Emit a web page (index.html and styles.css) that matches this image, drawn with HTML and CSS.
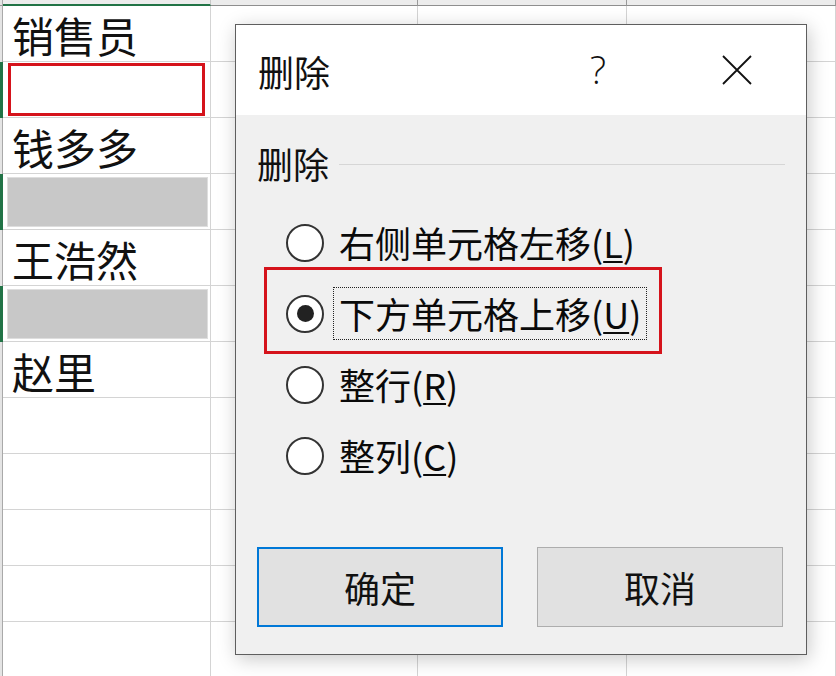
FILE: index.html
```html
<!DOCTYPE html>
<html lang="zh-CN">
<head>
<meta charset="utf-8">
<title>删除</title>
<link rel="stylesheet" href="styles.css">
</head>
<body>
<div class="sheet">
  <div class="rh hdr"></div><div class="c hdr hdr-sel"></div><div class="c hdr"></div><div class="c hdr"></div><div class="c hdr last"></div>

  <div class="rh"></div><div class="c"><span class="txt">销售员</span></div><div class="c"></div><div class="c"></div><div class="c last"></div>
  <div class="rh sel"></div><div class="c"><div class="red-cell"></div></div><div class="c"></div><div class="c"></div><div class="c last"></div>
  <div class="rh"></div><div class="c"><span class="txt">钱多多</span></div><div class="c"></div><div class="c"></div><div class="c last"></div>
  <div class="rh sel"></div><div class="c"><div class="gray-cell"></div></div><div class="c"></div><div class="c"></div><div class="c last"></div>
  <div class="rh"></div><div class="c"><span class="txt">王浩然</span></div><div class="c"></div><div class="c"></div><div class="c last"></div>
  <div class="rh sel"></div><div class="c"><div class="gray-cell"></div></div><div class="c"></div><div class="c"></div><div class="c last"></div>
  <div class="rh"></div><div class="c"><span class="txt">赵里</span></div><div class="c"></div><div class="c"></div><div class="c last"></div>
  <div class="rh"></div><div class="c"></div><div class="c"></div><div class="c"></div><div class="c last"></div>
  <div class="rh"></div><div class="c"></div><div class="c"></div><div class="c"></div><div class="c last"></div>
  <div class="rh"></div><div class="c"></div><div class="c"></div><div class="c"></div><div class="c last"></div>
  <div class="rh"></div><div class="c"></div><div class="c"></div><div class="c"></div><div class="c last"></div>
  <div class="rh"></div><div class="c"></div><div class="c"></div><div class="c"></div><div class="c last"></div>
</div>

<div class="dialog">
  <div class="titlebar">
    <span class="title">删除</span>
    <span class="help">?</span>
    <span class="close">
      <svg width="30" height="30" viewBox="0 0 30 30"><path d="M1 1 L29 29 M29 1 L1 29" stroke="#111" stroke-width="1.8" fill="none"/></svg>
    </span>
  </div>
  <div class="body">
    <div class="group-head"><span>删除</span><span class="rule"></span></div>
    <div class="options">
      <div class="opt"><span class="radio"></span><span class="lbl">右侧单元格左移(<u>L</u>)</span></div>
      <div class="opt"><span class="radio on"></span><span class="lbl focus">下方单元格上移(<u>U</u>)</span></div>
      <div class="opt"><span class="radio"></span><span class="lbl">整行(<u>R</u>)</span></div>
      <div class="opt"><span class="radio"></span><span class="lbl">整列(<u>C</u>)</span></div>
    </div>
    <div class="buttons">
      <div class="btn primary">确定</div>
      <div class="btn">取消</div>
    </div>
    <div class="mark"></div>
  </div>
</div>
</body>
</html>
```

FILE: styles.css
```css
* { box-sizing: border-box; }
html, body { margin: 0; padding: 0; }
body {
  width: 836px;
  height: 676px;
  overflow: hidden;
  background: #ffffff;
  font-family: "Noto Sans CJK SC", "Microsoft YaHei", sans-serif;
  color: #111;
  position: relative;
}

/* spreadsheet */
.sheet {
  display: grid;
  grid-template-columns: 3px 208px 207px 209px 1fr;
  grid-template-rows: 6px repeat(12, 56px);
}
.rh {
  background: #e4e4e4;
  border-right: 1px solid #a9a9a9;
}
.rh.sel { background: #217346; border-right: none; }
.rh.hdr { border-bottom: 1px solid #9a9a9a; }
.c {
  border-right: 1px solid #d4d4d4;
  border-bottom: 1px solid #d4d4d4;
  position: relative;
}
.c.hdr {
  background: #ececec;
  border-right: 1px solid #9a9a9a;
  border-bottom: 1px solid #8e8e8e;
}
.c.hdr.hdr-sel {
  border-bottom: 2px solid #217346;
  border-right: 1px solid #c8c8c8;
}
.txt {
  display: block;
  padding: 3px 0 0 9px;
  font-size: 42px;
  line-height: 52px;
  color: #111;
}
.red-cell {
  margin: 1px 0 0 5px;
  width: 197px;
  height: 53px;
  border: 3px solid #d5131b;
  background: #fff;
}
.gray-cell {
  margin: 3px 2px 0 4px;
  height: 50px;
  background: #c8c8c8;
  border: 1px solid #dedede;
}

/* dialog */
.dialog {
  position: absolute;
  left: 235px;
  top: 24px;
  width: 572px;
  height: 631px;
  border: 1px solid #5e5e5e;
  background: #f0f0f0;
  box-shadow: 2px 4px 18px rgba(0,0,0,0.22);
  display: flex;
  flex-direction: column;
}
.titlebar {
  height: 90px;
  background: #ffffff;
  display: flex;
  align-items: center;
  padding: 0 54px 0 22px;
}
.title {
  font-size: 36px;
  flex: 1;
  padding-top: 2px;
}
.help {
  width: 30px;
  text-align: center;
  font-family: "Open Sans", "Noto Sans", sans-serif;
  font-size: 38px;
  font-weight: 300;
  margin-right: 109px;
  margin-top: -2px;
}
.close {
  width: 30px;
  height: 30px;
  display: flex;
}
.body {
  flex: 1;
  position: relative;
  padding: 26px 23px 27px 21px;
  display: flex;
  flex-direction: column;
}
.group-head {
  height: 44px;
  display: flex;
  align-items: center;
  font-size: 36px;
  margin-right: -2px;
}
.group-head .rule {
  flex: 1;
  height: 1px;
  background: #d6d6d6;
  margin-left: 10px;
  margin-top: 2px;
}
.options {
  margin-top: 22px;
  padding-left: 29px;
}
.opt {
  height: 71px;
  display: flex;
  align-items: center;
}
.radio {
  width: 38px;
  height: 38px;
  border: 2px solid #333;
  border-radius: 50%;
  background: #fff;
  display: flex;
  align-items: center;
  justify-content: center;
  flex: none;
}
.radio.on::after {
  content: "";
  width: 17px;
  height: 17px;
  border-radius: 50%;
  background: #222;
}
.lbl {
  font-size: 36px;
  margin-left: 9px;
  padding: 0 5px;
  height: 53px;
  line-height: 51px;
  border: 1px solid transparent;
  white-space: nowrap;
  color: #0a0a0a;
}
.lbl u { text-underline-offset: 3px; text-decoration-thickness: 2px; }
.lbl.focus { border: 1px dotted #222; }
.buttons {
  margin-top: auto;
  display: flex;
  gap: 34px;
  padding-left: 0;
}
.btn {
  width: 246px;
  height: 80px;
  background: #e1e1e1;
  border: 1px solid #adadad;
  display: flex;
  align-items: center;
  justify-content: center;
  font-size: 36px;
}
.btn.primary {
  border: 2px solid #0078d7;
}
.mark {
  position: absolute;
  left: 28px;
  top: 152px;
  width: 398px;
  height: 87px;
  border: 3px solid #d5131b;
  pointer-events: none;
}
```
